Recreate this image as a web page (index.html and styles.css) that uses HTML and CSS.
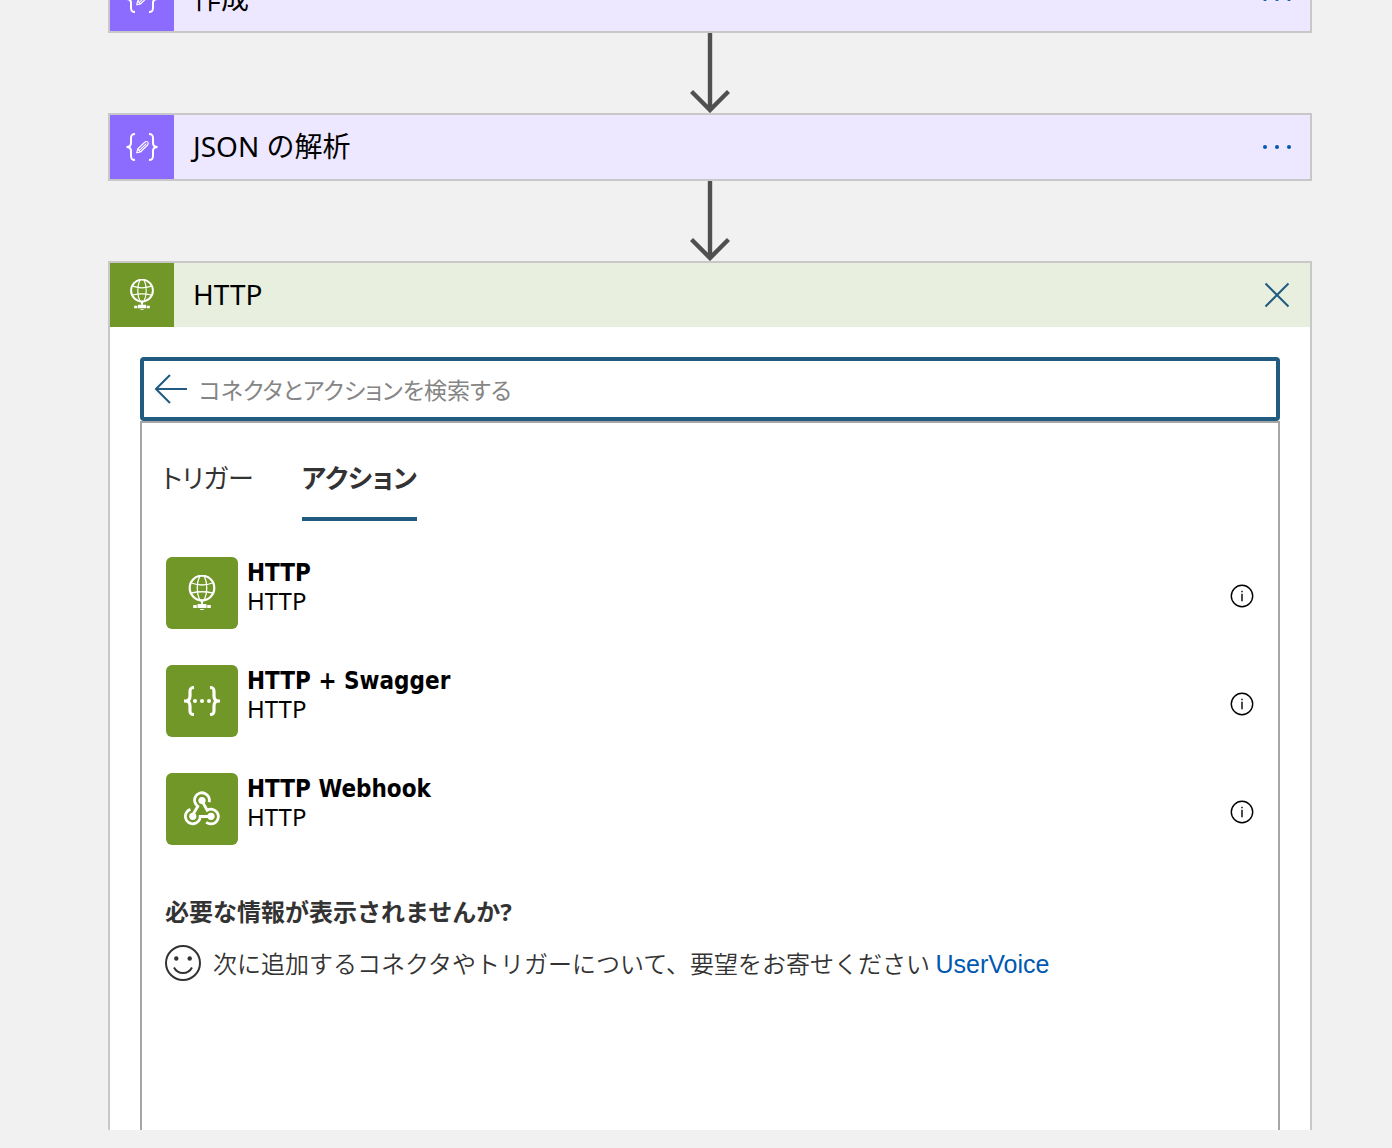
FILE: index.html
```html
<!DOCTYPE html>
<html lang="ja">
<head>
<meta charset="utf-8">
<meta name="viewport" content="width=device-width, initial-scale=1">
<title>HTTP</title>
<link rel="stylesheet" href="styles.css">
</head>
<body>
<svg class="defs" aria-hidden="true">
  <symbol id="arrow-down" viewBox="0 0 40 80"><path d="M20 0V76M1.500 58.500L20 77L38.500 58.500" fill="none" stroke="#505050" stroke-width="4.400"/></symbol>
  <symbol id="data-op" viewBox="0 0 32 32" fill="none" stroke="#fff">
    <path d="M9 3C5.500 3 5 4.500 5 7.500V12C5 14.500 3.500 16 .5 16C3.500 16 5 17.500 5 20V24.500C5 27.500 5.500 29 9 29M23 3C26.500 3 27 4.500 27 7.500V12C27 14.500 28.500 16 31.500 16C28.500 16 27 17.500 27 20V24.500C27 27.500 26.500 29 23 29" stroke-width="2"/>
    <path d="M10.700 21.800L11.700 18L19 11Q20.500 10 21.800 11.200Q22.800 12.500 21.700 14L14.500 21ZM11.700 18L14.500 21M13.200 19.600L20.400 12.600" stroke-width="1.100" stroke-linejoin="round"/>
  </symbol>
  <symbol id="globe" viewBox="0 0 36 36">
    <g fill="none" stroke="#fff"><circle cx="18" cy="13" r="12.300" stroke-width="2.200"/>
    <path d="M15.500 1.500C12.500 8 12.500 18 15.500 24.500M20.500 1.500C23.500 8 23.500 18 20.500 24.500M7.500 8Q18 12 28.500 8M7.500 18Q18 15.500 28.500 18" stroke-width="1.300"/></g>
    <path d="M16.200 25H19.800L18.700 29H22.500V33H13.500V29H17.300ZM9.200 30H12.800V33H9.200ZM23.200 30H26.800V33H23.200ZM16.200 34H19.800V35H16.200Z" fill="#fff"/>
  </symbol>
  <symbol id="swagger" viewBox="0 0 36 36">
    <path d="M10 4.500C6.500 4.500 6 5.500 6 8.500V13C6 16 5 18 1.500 18C5 18 6 20 6 23V27.500C6 30.500 6.500 31.500 10 31.500M26 4.500C29.500 4.500 30 5.500 30 8.500V13C30 16 31 18 34.500 18C31 18 30 20 30 23V27.500C30 30.500 29.500 31.500 26 31.500" fill="none" stroke="#fff" stroke-width="3.200"/>
    <path d="M0 16.500H2V19.500H0ZM34 16.500H36V19.500H34Z" fill="#fff"/>
    <g fill="#fff"><circle cx="11" cy="18" r="2"/><circle cx="18" cy="18" r="2"/><circle cx="25" cy="18" r="2"/></g>
  </symbol>
  <symbol id="webhook" viewBox="0 0 36 36">
    <g fill="none" stroke="#fff" stroke-width="2.800">
      <path d="M25.100 11.200A7.400 7.400 0 1 0 13.800 15.300L9 23.500"/>
      <path d="M6.400 18.400A7.400 7.400 0 1 0 16.200 25.500L27 25.500"/>
      <path d="M22.200 31.200A7.400 7.400 0 1 0 23.200 19.200L18 10"/>
    </g>
    <g fill="#fff"><circle cx="18" cy="9.500" r="3.600"/><circle cx="8.800" cy="25.300" r="3.600"/><circle cx="27" cy="25.300" r="3.600"/></g>
  </symbol>
  <symbol id="info" viewBox="0 0 24 24"><circle cx="12" cy="12" r="10.700" fill="none" stroke="#000" stroke-width="1.400"/><path d="M11.300 9.800H12.700V17.200H11.300ZM11.300 6.800H12.700V8.300H11.300Z"/></symbol>
  <symbol id="dots" viewBox="0 0 32 32" fill="#0058b0"><circle cx="4" cy="16" r="2"/><circle cx="16" cy="16" r="2"/><circle cx="28" cy="16" r="2"/></symbol>
</svg>

<main class="designer">
  <section class="card card-data">
    <header class="card-head">
      <span class="card-icon"><svg><use href="#data-op"/></svg></span>
      <h2 class="card-title">作成</h2>
      <button class="card-action" type="button" aria-label="メニュー"><svg><use href="#dots"/></svg></button>
    </header>
  </section>
  <svg class="connector" aria-hidden="true"><use href="#arrow-down"/></svg>
  <section class="card card-data">
    <header class="card-head">
      <span class="card-icon"><svg><use href="#data-op"/></svg></span>
      <h2 class="card-title">JSON の解析</h2>
      <button class="card-action" type="button" aria-label="メニュー"><svg><use href="#dots"/></svg></button>
    </header>
  </section>
  <svg class="connector" aria-hidden="true"><use href="#arrow-down"/></svg>
  <section class="card card-http">
    <header class="card-head">
      <span class="card-icon"><svg><use href="#globe"/></svg></span>
      <h2 class="card-title">HTTP</h2>
      <button class="card-action" type="button" aria-label="閉じる"><svg viewBox="0 0 32 32"><path d="M4.500 4.500L27.500 27.500M27.500 4.500L4.500 27.500" fill="none" stroke="#215b80" stroke-width="2"/></svg></button>
    </header>
    <div class="card-body">
      <div class="search">
        <button class="back" type="button" aria-label="戻る"><svg viewBox="0 0 32 32"><path d="M32 16H1M15 2L1 16L15 30" fill="none" stroke="#215b80" stroke-width="2"/></svg></button>
        <input class="search-input" type="text" aria-label="コネクタとアクションを検索する" placeholder="コネクタとアクションを検索する">
      </div>
      <div class="picker">
        <div class="tabs" role="tablist">
          <button class="tab" type="button" role="tab" aria-selected="false">トリガー</button>
          <button class="tab tab-active" type="button" role="tab" aria-selected="true">アクション</button>
        </div>
        <ul class="operations">
          <li class="operation">
            <span class="op-icon"><svg><use href="#globe"/></svg></span>
            <div class="op-text"><strong>HTTP</strong><span>HTTP</span></div>
            <button class="info" type="button" aria-label="情報"><svg><use href="#info"/></svg></button>
          </li>
          <li class="operation">
            <span class="op-icon"><svg><use href="#swagger"/></svg></span>
            <div class="op-text"><strong>HTTP + Swagger</strong><span>HTTP</span></div>
            <button class="info" type="button" aria-label="情報"><svg><use href="#info"/></svg></button>
          </li>
          <li class="operation">
            <span class="op-icon"><svg><use href="#webhook"/></svg></span>
            <div class="op-text"><strong>HTTP Webhook</strong><span>HTTP</span></div>
            <button class="info" type="button" aria-label="情報"><svg><use href="#info"/></svg></button>
          </li>
        </ul>
        <div class="feedback">
          <h3 class="feedback-title">必要な情報が表示されませんか?</h3>
          <div class="feedback-line">
            <svg class="smiley" viewBox="0 0 36 36" aria-hidden="true"><circle cx="18" cy="18" r="17" fill="none" stroke="#333" stroke-width="2"/><path d="M9 22.500Q12 28 18 28T27 22.500" fill="none" stroke="#333" stroke-width="2"/><circle cx="11.300" cy="13.500" r="2.200" fill="#333"/><circle cx="24.700" cy="13.500" r="2.200" fill="#333"/></svg>
            <p>次に追加するコネクタやトリガーについて、要望をお寄せください <a href="#uservoice">UserVoice</a></p>
          </div>
        </div>
      </div>
    </div>
  </section>
</main>
</body>
</html>
```
FILE: styles.css
```css
* { box-sizing: border-box; }

body {
  margin: 0;
  height: 100vh;
  overflow: hidden;
  background: #f1f1f1;
  color: #333;
  font-family: "Noto Sans", "Noto Sans CJK JP", sans-serif;
  font-size: 24px;
  line-height: 28px;
}

h2, h3, p, ul { margin: 0; padding: 0; }
svg { display: block; }
button { margin: 0; padding: 0; border: 0; background: none; font: inherit; color: inherit; cursor: pointer; }
.defs { display: none; }

/* the canvas is scrolled part of the way past its first card */
.designer {
  display: flex;
  flex-direction: column;
  min-height: calc(100vh + 35px);
  margin-top: -35px;
  padding: 0 80px 18px 108px;
}

.card { border: 2px solid #c8c8c8; }
.card-head { display: flex; align-items: center; height: 64px; padding-right: 17px; }
.card-icon { display: flex; align-items: center; justify-content: center; width: 64px; height: 64px; }
.card-icon svg { width: 32px; height: 32px; }
.card-title {
  flex: 1;
  padding: 0 0 2px 19px;
  color: #000;
  font-size: 28px;
  font-weight: 400;
  line-height: 32px;
}
.card-action svg { width: 32px; height: 32px; }

.card-data .card-head { background: #ede8ff; }
.card-data .card-icon { background: #8c6cff; }

.card-http { flex: 1; display: flex; flex-direction: column; border-bottom: 0; background: #fff; }
.card-http .card-head { background: #e8efdf; }
.card-http .card-icon, .op-icon { background: #709727; }

.connector { flex: none; align-self: center; width: 40px; height: 80px; }

.card-body { flex: 1; display: flex; flex-direction: column; padding: 30px 30px 0; }

.search {
  display: flex;
  align-items: center;
  height: 64px;
  padding-left: 11px;
  border: 4px solid #215b80;
  border-radius: 4px;
}
.back svg { width: 32px; height: 32px; }
.search-input {
  flex: 1;
  min-width: 0;
  height: 56px;
  padding: 2px 12px 0;
  border: 0;
  outline: 0;
  background: none;
  font: inherit;
  font-size: 23px;
  font-feature-settings: "palt";
}
.search-input::placeholder { color: #858585; opacity: 1; }

.picker {
  flex: 1;
  padding-top: 36px;
  border: 2px solid #a6a6a6;
  border-bottom: 0;
}

.tabs { display: flex; gap: 48px; padding-left: 20px; }
.tab {
  height: 62px;
  padding-bottom: 20px;
  border-bottom: 4px solid transparent;
  font-size: 26px;
  line-height: 32px;
  font-feature-settings: "palt";
}
.tab-active { border-color: #215b80; font-weight: 700; }

.operations { display: grid; gap: 36px; padding: 36px 24px 0; list-style: none; }
.operation { display: flex; align-items: flex-start; color: #000; }
.op-icon { display: flex; align-items: center; justify-content: center; width: 72px; height: 72px; border-radius: 6px; }
.op-icon svg { width: 36px; height: 36px; }
.op-text { flex: 1; display: grid; padding: 2px 0 0 9px; }
.op-text strong { font-family: "DejaVu Sans Condensed", "Noto Sans CJK JP", sans-serif; }
.info { align-self: center; padding-top: 6px; }
.info svg { width: 24px; height: 24px; }

.feedback { padding: 53px 23px 0; }
.feedback-title { font-size: 24px; }
.feedback-line { display: flex; align-items: center; gap: 12px; padding-top: 19px; }
.feedback-line p { font-family: "Noto Sans CJK JP", sans-serif; font-weight: 350; }
.smiley { width: 36px; height: 36px; }
.feedback a { color: #0058b0; font-family: "Liberation Sans", sans-serif; font-size: 25px; font-weight: 400; text-decoration: none; }
```
